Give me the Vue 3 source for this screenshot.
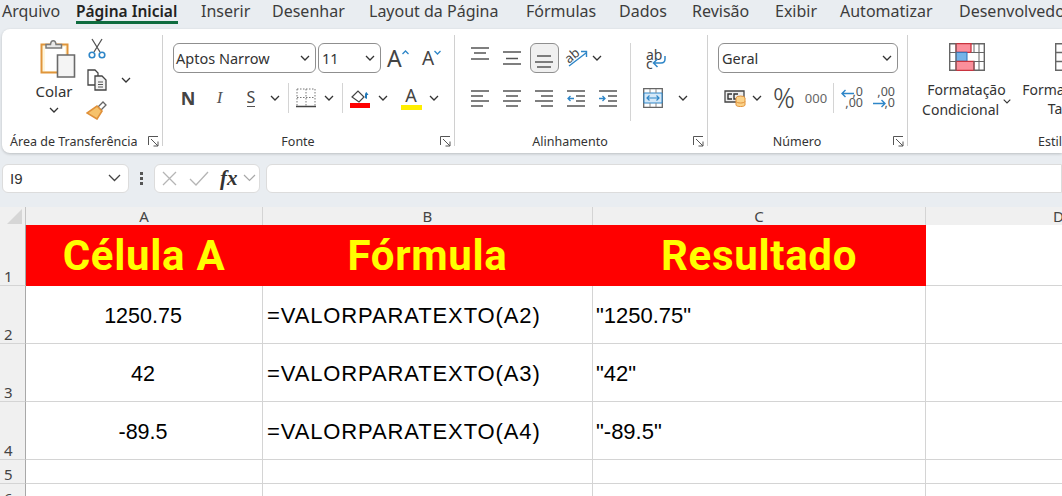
<script setup>
const tabs = [
  { t: 'Arquivo', w: 74 },
  { t: 'Página Inicial', w: 125, active: true },
  { t: 'Inserir', w: 71 },
  { t: 'Desenhar', w: 97 },
  { t: 'Layout da Página', w: 157 },
  { t: 'Fórmulas', w: 93 },
  { t: 'Dados', w: 73 },
  { t: 'Revisão', w: 83 },
  { t: 'Exibir', w: 65 },
  { t: 'Automatizar', w: 119 },
  { t: 'Desenvolvedor', w: 130 }
]
const rows = [
  { n: 1, h: 61, cells: ['Célula A', 'Fórmula', 'Resultado'], head: true },
  { n: 2, h: 58, cells: ['1250.75', '=VALORPARATEXTO(A2)', '"1250.75"'] },
  { n: 3, h: 58, cells: ['42', '=VALORPARATEXTO(A3)', '"42"'] },
  { n: 4, h: 58, cells: ['-89.5', '=VALORPARATEXTO(A4)', '"-89.5"'] },
  { n: 5, h: 24, cells: ['', '', ''] },
  { n: 6, h: 24, cells: ['', '', ''] }
]
</script>

<template>
  <div class="app">
    <nav class="tabs">
      <div v-for="tab in tabs" :key="tab.t" class="tab" :class="{ active: tab.active }" :style="{ width: tab.w + 'px' }">
        <span>{{ tab.t }}</span>
      </div>
    </nav>

    <section class="ribbon">
      <!-- Área de Transferência -->
      <div class="group g1">
        <div class="g-body clip">
          <div class="paste">
            <svg class="paste-ic" width="36" height="40" viewBox="0 0 36 40">
              <path d="M1.500 6.500h26v28h-26z" fill="#fff6dc" stroke="#e0953a" stroke-width="2"/>
              <path d="M5 9h20v24H5z" fill="#fff"/>
              <path d="M6 10V6.500h4.500c.5-5 5-5 5.500 0H21.500V10z" fill="#e8e8e8" stroke="#7a7a7a" stroke-width="1.500"/>
              <path d="M17.500 17h17v22h-17z" fill="#f4f4f4" stroke="#6a6a6a" stroke-width="1.600"/>
            </svg>
            <span class="colar">Colar</span>
            <svg class="chev" width="10" height="6" viewBox="0 0 10 6"><path d="M1 1l4 4 4-4" fill="none" stroke="#333" stroke-width="1.300"/></svg>
          </div>
          <div class="clip-tools">
            <svg width="20" height="22" viewBox="0 0 20 22">
              <path d="M5 1l8 13M15 1L7 14" stroke="#555" stroke-width="1.300" fill="none"/>
              <circle cx="5" cy="17" r="2.800" fill="none" stroke="#2e86c8" stroke-width="1.600"/>
              <circle cx="15" cy="17" r="2.800" fill="none" stroke="#2e86c8" stroke-width="1.600"/>
            </svg>
            <div class="copy-row">
              <svg width="22" height="22" viewBox="0 0 22 22">
                <path d="M11 16H2V1h7l3 3v3" fill="#fff" stroke="#444" stroke-width="1.300"/>
                <path d="M9 7h7l4 4v10H9z" fill="#f2f2f2" stroke="#444" stroke-width="1.300"/>
                <path d="M12 13h5M12 15.500h5M12 18h5" stroke="#555"/>
              </svg>
              <svg class="chev" width="10" height="6" viewBox="0 0 10 6"><path d="M1 1l4 4 4-4" fill="none" stroke="#333" stroke-width="1.300"/></svg>
            </div>
            <svg width="22" height="20" viewBox="0 0 22 20">
              <path d="M12 7l5-5 3 3-5 5z" fill="#fff" stroke="#666" stroke-width="1.300"/>
              <path d="M11 6l5 5-5 8-10-6z" fill="#f6c26b" stroke="#e0913a" stroke-width="1.600"/>
            </svg>
          </div>
        </div>
        <div class="g-label l1"><span>Área de Transferência</span><svg class="launch" width="11" height="11" viewBox="0 0 11 11"><path d="M.5 9V.5H10M3 3l7 7M10 5.500V10H5.500" fill="none" stroke="#555"/></svg></div>
      </div>

      <!-- Fonte -->
      <div class="group g2">
        <div class="g-body col">
          <div class="row1 font-row">
            <div class="select fname"><span>Aptos Narrow</span><svg width="10" height="6" viewBox="0 0 10 6"><path d="M1 1l4 4 4-4" fill="none" stroke="#333" stroke-width="1.300"/></svg></div>
            <div class="select fsize"><span>11</span><svg width="10" height="6" viewBox="0 0 10 6"><path d="M1 1l4 4 4-4" fill="none" stroke="#333" stroke-width="1.300"/></svg></div>
            <div class="grow"><span class="big-a">A</span><svg width="7" height="5" viewBox="0 0 7 5"><path d="M.5 4l3-3 3 3" fill="none" stroke="#2e86c8" stroke-width="1.300"/></svg></div>
            <div class="grow shrink"><span class="small-a">A</span><svg width="7" height="5" viewBox="0 0 7 5"><path d="M.5 1l3 3 3-3" fill="none" stroke="#2e86c8" stroke-width="1.300"/></svg></div>
          </div>
          <div class="row2 font-tools">
            <b class="tool-n">N</b>
            <i class="tool-i">I</i>
            <span class="tool-s">S</span>
            <svg class="c" width="10" height="6" viewBox="0 0 10 6"><path d="M1 1l4 4 4-4" fill="none" stroke="#333" stroke-width="1.300"/></svg>
            <span class="vsep"></span>
            <svg class="c" width="20" height="20" viewBox="0 0 20 20">
              <path d="M1 1h18M1 1v17M19 1v17M10 1v17M1 9.500h18" fill="none" stroke="#777" stroke-dasharray="1.500 1.500"/>
              <path d="M0 18.500h20" stroke="#444" stroke-width="1.500"/>
            </svg>
            <svg class="c" width="10" height="6" viewBox="0 0 10 6"><path d="M1 1l4 4 4-4" fill="none" stroke="#333" stroke-width="1.300"/></svg>
            <span class="vsep"></span>
            <svg class="c" width="20" height="20" viewBox="0 0 20 20">
              <path d="M2 9l6-6 6 6-5 5z" fill="#fff" stroke="#444" stroke-width="1.200"/>
              <path d="M8 3V1M15 10c0-4 0-5 1.500-6l2 3h-1.500v4" fill="#1f78b8"/>
              <path d="M0 15h20v5H0z" fill="#f00"/>
            </svg>
            <svg class="c" width="10" height="6" viewBox="0 0 10 6"><path d="M1 1l4 4 4-4" fill="none" stroke="#333" stroke-width="1.300"/></svg>
            <div class="c color-a"><span>A</span><i></i></div>
            <svg class="c" width="10" height="6" viewBox="0 0 10 6"><path d="M1 1l4 4 4-4" fill="none" stroke="#333" stroke-width="1.300"/></svg>
          </div>
        </div>
        <div class="g-label lc"><span>Fonte</span><svg class="launch" width="11" height="11" viewBox="0 0 11 11"><path d="M.5 9V.5H10M3 3l7 7M10 5.500V10H5.500" fill="none" stroke="#555"/></svg></div>
      </div>

      <!-- Alinhamento -->
      <div class="group g3">
        <div class="g-body al">
          <div class="al-left">
            <div class="al-top">
              <span class="al-btn"><svg width="18" height="30" viewBox="0 0 18 30"><path d="M0 5h18M3 10h12M0 16h18" stroke="#555" stroke-width="1.300"/></svg></span>
              <span class="al-btn"><svg width="18" height="30" viewBox="0 0 18 30"><path d="M0 9h18M3 15.500h12M0 21h18" stroke="#555" stroke-width="1.300"/></svg></span>
              <span class="al-btn sel"><svg width="18" height="28" viewBox="0 0 18 28"><path d="M2 12h14M0 18h18M2 23h14" stroke="#555" stroke-width="1.300"/></svg></span>
              <span class="al-btn orient"><svg width="24" height="24" viewBox="0 0 24 24">
                <path d="M5 20L22 7M17 5.500h5.500V11" fill="none" stroke="#2e86c8" stroke-width="1.400"/>
                <text x="1" y="15" class="ab" transform="rotate(-40 7 11)">ab</text>
              </svg></span>
              <svg class="oc" width="10" height="6" viewBox="0 0 10 6"><path d="M1 1l4 4 4-4" fill="none" stroke="#333" stroke-width="1.300"/></svg>
            </div>
            <div class="al-bottom">
              <span class="al-btn"><svg width="18" height="17" viewBox="0 0 18 17"><path d="M0 1h18M0 6h12M0 11h18M0 16h12" stroke="#555" stroke-width="1.300"/></svg></span>
              <span class="al-btn"><svg width="18" height="17" viewBox="0 0 18 17"><path d="M0 1h18M3 6h12M0 11h18M3 16h12" stroke="#555" stroke-width="1.300"/></svg></span>
              <span class="al-btn"><svg width="18" height="17" viewBox="0 0 18 17"><path d="M0 1h18M6 6h12M0 11h18M6 16h12" stroke="#555" stroke-width="1.300"/></svg></span>
              <span class="al-btn"><svg width="18" height="17" viewBox="0 0 18 17"><path d="M0 1h18M9 6h9M9 11h9M0 16h18" stroke="#555" stroke-width="1.300"/><path d="M7 8.500H1M3.500 6L1 8.500 3.500 11" fill="none" stroke="#2e86c8" stroke-width="1.300"/></svg></span>
              <span class="al-btn"><svg width="18" height="17" viewBox="0 0 18 17"><path d="M0 1h18M9 6h9M9 11h9M0 16h18" stroke="#555" stroke-width="1.300"/><path d="M0 8.500h6M3.500 6L6 8.500 3.500 11" fill="none" stroke="#2e86c8" stroke-width="1.300"/></svg></span>
            </div>
          </div>
          <span class="al-sep"></span>
          <div class="al-right">
            <div class="wrap-ic"><span class="wa">ab</span><span class="wc">c</span><svg width="14" height="12" viewBox="0 0 14 12"><path d="M13 0v3c0 3-2 4-4 4H2M5.500 3L1.500 7l4 4" fill="none" stroke="#2e86c8" stroke-width="1.500"/></svg></div>
            <div class="merge-row">
              <svg width="20" height="20" viewBox="0 0 20 20">
                <path d="M.7.700h18.600v18.600H.7z" fill="#fff" stroke="#666" stroke-width="1.300"/>
                <path d="M1 5h18v10H1z" fill="#d5e8f7" stroke="#2e86c8"/>
                <path d="M7 1v4M13 1v4M7 15v4M13 15v4" stroke="#888"/>
                <path d="M4 10h12M6.500 7.500L4 10l2.500 2.500M13.500 7.500L16 10l-2.500 2.500" fill="none" stroke="#2e86c8" stroke-width="1.200"/>
              </svg>
              <svg width="10" height="6" viewBox="0 0 10 6"><path d="M1 1l4 4 4-4" fill="none" stroke="#333" stroke-width="1.300"/></svg>
            </div>
          </div>
        </div>
        <div class="g-label lc la"><span>Alinhamento</span><svg class="launch" width="11" height="11" viewBox="0 0 11 11"><path d="M.5 9V.5H10M3 3l7 7M10 5.500V10H5.500" fill="none" stroke="#555"/></svg></div>
      </div>

      <!-- Número -->
      <div class="group g4">
        <div class="g-body col">
          <div class="row1"><div class="select geral"><span>Geral</span><svg width="10" height="6" viewBox="0 0 10 6"><path d="M1 1l4 4 4-4" fill="none" stroke="#333" stroke-width="1.300"/></svg></div></div>
          <div class="row2 num-tools">
            <svg class="c" width="22" height="18" viewBox="0 0 22 18">
              <path d="M1 2h19v11H1z" fill="#eee" stroke="#444" stroke-width="1.300"/>
              <path d="M8 5H4v5h4M14 5h-4v5h4" fill="none" stroke="#333" stroke-width="1.400"/>
              <ellipse cx="16.500" cy="9" rx="4.500" ry="2" fill="#fbd38a" stroke="#e0913a"/>
              <path d="M12 9v7c0 2 9 2 9 0V9" fill="#fbd38a" stroke="#e0913a"/>
              <path d="M12 12.500c1 2 8 2 9 0" fill="none" stroke="#e0913a"/>
            </svg>
            <svg class="c" width="10" height="6" viewBox="0 0 10 6"><path d="M1 1l4 4 4-4" fill="none" stroke="#333" stroke-width="1.300"/></svg>
            <span class="c pct">%</span>
            <span class="c thou">000</span>
            <span class="vsep"></span>
            <div class="c dec"><span class="d1">,0</span><span class="d2">,00</span><svg width="13" height="9" viewBox="0 0 13 9"><path d="M13 4.500H1M4.500 1L1 4.500 4.500 8" fill="none" stroke="#2e86c8" stroke-width="1.400"/></svg></div>
            <div class="c dec dec-r"><span class="d1">,00</span><span class="d2">,0</span><svg width="13" height="9" viewBox="0 0 13 9"><path d="M0 4.500h12M8.500 1L12 4.500 8.500 8" fill="none" stroke="#2e86c8" stroke-width="1.400"/></svg></div>
          </div>
        </div>
        <div class="g-label lc"><span>Número</span><svg class="launch" width="11" height="11" viewBox="0 0 11 11"><path d="M.5 9V.5H10M3 3l7 7M10 5.500V10H5.500" fill="none" stroke="#555"/></svg></div>
      </div>

      <!-- Estilos -->
      <div class="group g5">
        <div class="g-body styles">
          <div class="style-btn first">
            <svg width="36" height="28" viewBox="0 0 36 28">
              <path d="M.7.700h34.600v26.600H.7z" fill="#fff" stroke="#666" stroke-width="1.400"/>
              <path d="M7 .7h15v8.600H7z" fill="#fb8f9b" stroke="#c8343f" stroke-width="1.300"/>
              <path d="M7 9.300h11v9H7z" fill="#74b3e8" stroke="#2a70b8" stroke-width="1"/>
              <path d="M7 18.300h18v9H7z" fill="#fb8f9b" stroke="#c8343f" stroke-width="1.300"/>
              <path d="M7 0v28M25 0v10M25 18v10M30 0v28M0 9.500h7M0 18.500h7M22 9.500h14M25 18.500h11" stroke="#666" fill="none"/>
            </svg>
            <span>Formatação</span>
            <span class="cond">Condicional <svg width="8" height="5" viewBox="0 0 8 5"><path d="M.7.700L4 4l3.300-3.300" fill="none" stroke="#333" stroke-width="1.100"/></svg></span>
          </div>
          <div class="style-btn second">
            <svg width="36" height="28" viewBox="0 0 36 28">
              <path d="M.7.700h34.600v26.600H.7zM0 9.500h36M0 18.500h36" fill="#fff" stroke="#666" stroke-width="1.400"/>
            </svg>
            <span>Formatar como</span>
            <span class="cond tabela">Tabela</span>
          </div>
        </div>
        <div class="g-label estilo"><span>Estilos</span></div>
      </div>
    </section>

    <div class="fbar">
      <div class="namebox"><span>I9</span><svg width="13" height="8" viewBox="0 0 13 8"><path d="M1 1l5.500 5.500L12 1" fill="none" stroke="#444" stroke-width="1.300"/></svg></div>
      <div class="dots"><i></i><i></i><i></i></div>
      <div class="fx">
        <svg width="17" height="17" viewBox="0 0 17 17"><path d="M2 2l13 13M15 2L2 15" stroke="#b5b5b5" stroke-width="1.300"/></svg>
        <svg width="20" height="15" viewBox="0 0 20 15"><path d="M1 8l6 6L19 1" fill="none" stroke="#b5b5b5" stroke-width="1.300"/></svg>
        <span class="fx-t">fx</span>
        <svg width="13" height="8" viewBox="0 0 13 8"><path d="M1 1l5.500 5.500L12 1" fill="none" stroke="#a8a8a8" stroke-width="1.200"/></svg>
      </div>
      <div class="finput"></div>
    </div>

    <div class="sheet">
      <div class="colhead">
        <div class="corner"><svg width="15" height="15" viewBox="0 0 15 15"><path d="M15 0v15H0z" fill="#d6d6d6"/></svg></div>
        <div class="ch a">A</div>
        <div class="ch b">B</div>
        <div class="ch c3">C</div>
        <div class="ch d">D</div>
      </div>
      <div v-for="r in rows" :key="r.n" class="srow" :style="{ height: r.h + 'px' }">
        <div class="rh">{{ r.n }}</div>
        <div class="cell a center" :class="{ head: r.head }">{{ r.cells[0] }}</div>
        <div class="cell b" :class="{ head: r.head }">{{ r.cells[1] }}</div>
        <div class="cell c3" :class="{ head: r.head }">{{ r.cells[2] }}</div>
        <div class="cell d"></div>
      </div>
    </div>
  </div>
</template>

<style scoped>
.app { width: 1062px; height: 496px; overflow: hidden; background: #e9edf1; font-family: "Noto Sans", "Open Sans", sans-serif; color: #333; }
.app span, .app b { white-space: nowrap; }

.tabs { display: flex; height: 29px; padding-left: 2px; }
.tab { flex: none; font-size: 16px; line-height: 23px; color: #3c3c3c; white-space: nowrap; }
.tab.active { font-weight: 600; color: #222; font-size: 15.500px; }
.tab.active span { display: inline-block; border-bottom: 3px solid #0f6c3f; box-sizing: border-box; height: 24px; line-height: 22px; width: 102px; }

.ribbon { display: flex; height: 124px; margin-left: 2px; border-radius: 8px 0 0 8px; background: #fff; box-shadow: 0 1px 3px rgba(0,0,0,.2); width: 1060px; overflow: hidden; box-sizing: border-box; padding-top: 6px; }
.group { flex: none; display: flex; flex-direction: column; box-sizing: border-box; height: 111px; border-right: 1px solid #d0d0d0; }
.g1 { width: 161px; }
.g2 { width: 292px; padding-left: 10px; }
.g3 { width: 253px; }
.g4 { width: 200px; padding-left: 10px; }
.g5 { flex: 1; border-right: 0; }
.g-body { height: 98px; flex: none; }
.col { display: flex; flex-direction: column; }
.g-label { height: 16px; flex: none; font-size: 12.500px; line-height: 15px; color: #333; position: relative; display: flex; align-items: center; }
.l1 { padding-left: 8px; }
.lc { justify-content: center; padding-right: 31px; }
.la { padding-right: 22px; }
.launch { position: absolute; right: 3px; top: 3px; }

/* clipboard */
.clip { display: flex; }
.paste { width: 36px; margin-left: 34px; display: flex; flex-direction: column; align-items: center; padding-top: 3px; flex: none; }
.paste-ic { align-self: flex-start; margin-left: 4px; flex: none; }
.colar { font-size: 15px; line-height: 20px; margin-top: 3px; }
.paste .chev { margin-top: 6px; }
.clip-tools { display: flex; flex-direction: column; margin-left: 14px; align-items: flex-start; gap: 9px; padding-top: 3px; }
.clip-tools > svg:first-child { margin-left: 1px; }
.copy-row { display: flex; align-items: center; gap: 13px; }

/* rows */
.row1 { height: 30px; margin-top: 8px; display: flex; align-items: center; }
.row2 { display: grid; align-items: center; justify-items: center; margin-top: 10px; height: 30px; }
.select { height: 30px; box-sizing: border-box; border: 1px solid #8f8f8f; border-radius: 6px; display: flex; align-items: center; justify-content: space-between; padding: 0 5px 0 2px; font-size: 14.500px; flex: none; }
.fname { width: 143px; }
.fsize { width: 63px; margin-left: 2px; padding-left: 3px; }
.grow { width: 35px; margin-left: 6px; display: flex; align-items: flex-start; color: #444; flex: none; }
.grow svg { margin-top: 5px; }
.grow.shrink { margin-left: 0; width: 30px; }
.big-a { font-size: 23px; line-height: 26px; margin-left: 0; }
.small-a { font-size: 19px; line-height: 26px; margin-left: 0; }
.font-tools { grid-template-columns: 30px 33px 30px 18px 8px 28px 18px 8px 28px 18px 5px 28px 18px; }
.tool-n { font-size: 18px; font-family: "Noto Sans", sans-serif; color: #444; }
.tool-i { font-size: 17px; font-family: "Liberation Serif", serif; color: #555; }
.tool-s { font-size: 16px; color: #444; border-bottom: 1.500px solid #555; line-height: 17px; }
.vsep { width: 1px; height: 30px; background: #d4d4d4; }
.font-tools .color-a { grid-column: 12; }
.color-a { width: 21px; display: flex; flex-direction: column; align-items: center; }
.color-a span { font-size: 18px; line-height: 19px; color: #444; }
.color-a i { display: block; width: 21px; height: 5px; background: #ffef00; }

/* align */
.al { display: flex; }
.al-left { width: 175px; padding-left: 9px; box-sizing: border-box; flex: none; }
.al-top { height: 30px; margin-top: 8px; display: flex; align-items: center; }
.al-bottom { display: flex; margin-top: 10px; height: 30px; align-items: center; }
.al-btn { width: 32px; height: 30px; display: flex; align-items: center; justify-content: center; flex: none; box-sizing: border-box; }
.al-btn.sel { width: 29px; margin: 0 1.500px; background: #f0f0f0; border: 1px solid #8f8f8f; border-radius: 6px; }
.ab { font-size: 13px; fill: #444; font-family: "Noto Sans", sans-serif; }
.oc { margin-left: 0; flex: none; }
.al-sep { width: 1px; height: 78px; background: #d4d4d4; margin-top: 8px; flex: none; }
.al-right { flex: 1; }
.wrap-ic { height: 30px; margin-top: 8px; position: relative; width: 30px; margin-left: 8px; font-size: 14px; color: #444; line-height: 11px; }
.wa { position: absolute; left: 7px; top: 6px; }
.wc { position: absolute; left: 7px; top: 15px; }
.wrap-ic svg { position: absolute; left: 13px; top: 13px; }
.merge-row { display: flex; align-items: center; gap: 15px; height: 30px; margin-top: 10px; margin-left: 12px; }

/* number */
.geral { width: 180px; padding-left: 3px; }
.num-tools { grid-template-columns: 27px 18px 36px 28px 6px 32px 32px; justify-items: center; width: 181px; margin-left: 3px; }
.pct { font-size: 27px; line-height: 30px; font-weight: 300; color: #444; }
.thou { font-size: 13px; color: #666; }
.dec { position: relative; width: 22px; height: 22px; font-size: 12.500px; line-height: 10px; color: #555; }
.dec .d1 { position: absolute; right: 0; top: 0; }
.dec .d2 { position: absolute; right: 0; top: 11px; }
.dec svg { position: absolute; left: 0; top: 2px; }
.dec-r svg { top: 12px; }

/* styles */
.styles { display: flex; }
.style-btn { display: flex; flex-direction: column; align-items: center; font-size: 14px; line-height: 20px; flex: none; padding-top: 8px; color: #333; }
.style-btn svg:first-child { margin-bottom: 9px; }
.first { width: 93px; margin-left: 12px; }
.second { width: 104px; margin-left: 8px; }
.cond { margin-top: -1px; }
.cond svg { vertical-align: 2px; }
.tabela { padding-right: 8px; }
.estilo { padding-left: 130px; }

/* formula bar */
.fbar { display: flex; align-items: center; height: 30px; margin-top: 10px; padding-left: 2px; }
.namebox { width: 127px; height: 29px; box-sizing: border-box; background: #fff; border: 1px solid #dcdcdc; border-radius: 6px; display: flex; align-items: center; justify-content: space-between; padding: 0 7px 0 7px; font-size: 15px; font-family: "Liberation Sans", sans-serif; flex: none; }
.dots { width: 25px; display: flex; flex-direction: column; align-items: center; gap: 2px; flex: none; }
.dots i { width: 3px; height: 3px; background: #555; display: block; }
.fx { width: 106px; height: 29px; box-sizing: border-box; background: #fff; border: 1px solid #dcdcdc; border-radius: 6px; display: flex; align-items: center; padding-left: 6px; flex: none; }
.fx svg:nth-child(2) { margin-left: 11px; }
.fx svg:last-child { margin-left: 5px; }
.fx-t { font-family: "Liberation Serif", serif; font-style: italic; font-weight: 700; font-size: 21px; margin-left: 11px; color: #333; }
.finput { flex: 1; margin-left: 6px; height: 29px; background: #fff; border: 1px solid #dcdcdc; border-radius: 6px 0 0 6px; box-sizing: border-box; }

/* sheet */
.sheet { margin-top: 14px; background: #fff; }
.colhead { display: flex; height: 18px; background: #f0f0f0; }
.corner { width: 26px; box-sizing: border-box; border-right: 1px solid #c4c4c4; display: flex; align-items: flex-end; justify-content: flex-end; padding: 0 3px 1px 0; flex: none; }
.ch { box-sizing: border-box; border-right: 1px solid #d4d4d4; text-align: center; font-size: 15px; line-height: 19px; font-family: "Noto Sans", sans-serif; color: #444; flex: none; }
.a { width: 237px; }
.b { width: 330px; }
.c3 { width: 333px; }
.d { width: 266px; }
.srow { display: flex; box-sizing: border-box; }
.rh { width: 26px; flex: none; box-sizing: border-box; background: #f0f0f0; border-right: 1px solid #a8a8a8; border-bottom: 1px solid #d4d4d4; font-size: 15px; line-height: 18px; padding-left: 4px; display: flex; align-items: flex-end; color: #444; }
.cell { flex: none; box-sizing: border-box; border-right: 1px solid #d4d4d4; border-bottom: 1px solid #d4d4d4; font-family: "Liberation Sans", sans-serif; font-size: 22px; color: #000; display: flex; align-items: center; padding: 2px 0 0 3px; white-space: nowrap; }
.cell.b { letter-spacing: .88px; padding-left: 4px; }
.cell.center { justify-content: center; padding: 3px 2px 0 0; font-size: 21.500px; }
.cell.head { background: #f00; border-color: #f00; color: #ff0; font-family: Roboto, sans-serif; font-weight: 700; font-size: 42px; letter-spacing: .7px; justify-content: center; padding: 0; }
</style>
